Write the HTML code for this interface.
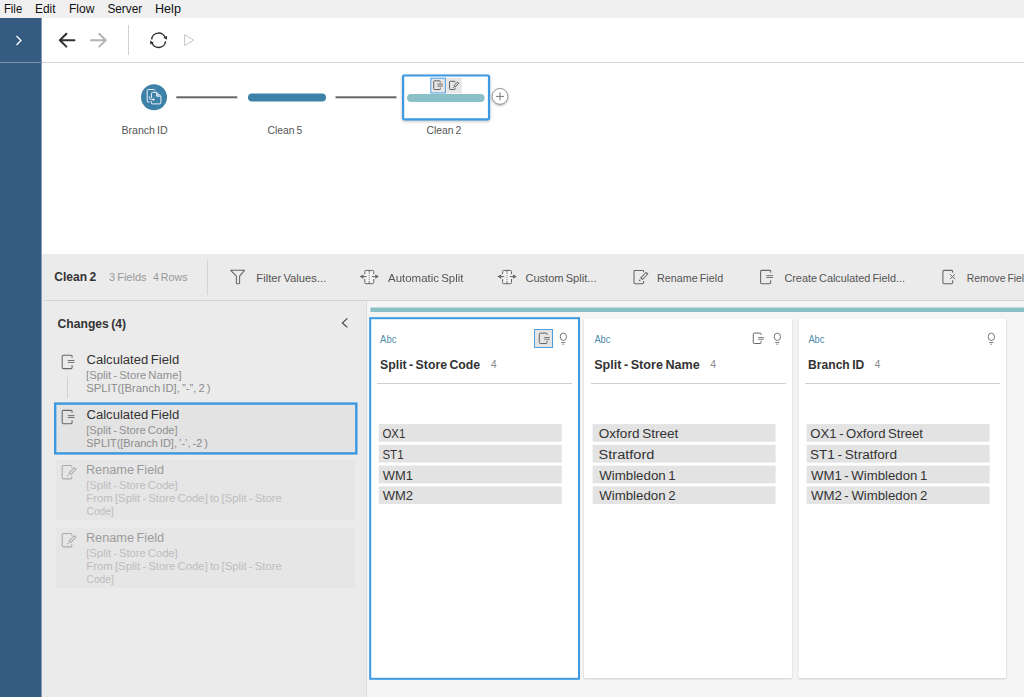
<!DOCTYPE html>
<html lang="en"><head><meta charset="utf-8"><title>Tableau Prep - Clean 2</title>
<style>
html,body{margin:0;padding:0}
body{width:1024px;height:697px;overflow:hidden;position:relative;background:#fff;font-family:"Liberation Sans",sans-serif}
div,span,svg{position:absolute;box-sizing:border-box}
.t{white-space:nowrap;word-spacing:-1px;line-height:1;transform-origin:0 50%;display:block}
#menubar{left:0;top:0;width:1024px;height:18px;background:#f0f0f0}
#sidebar{left:0;top:18px;width:41px;height:679px;background:#355c80}
#sidebar:after{content:'';position:absolute;left:41px;top:0;width:1px;height:679px;background:rgba(53,92,128,.6)}
#sidebar .ln{left:0;top:44px;width:42px;height:1px;background:#7d95ad}
#toolbar{left:42px;top:18px;width:982px;height:45px;background:#fff;border-bottom:1px solid #d3d3d3}
#flow{left:42px;top:63px;width:982px;height:191px;background:#fff}
#ptool{left:42px;top:254px;width:982px;height:47px;background:#ebebeb}
#ptool .hr{left:2px;top:46px;width:980px;height:1px;background:#d4d4d4}
#ptool .vr{left:165px;top:6px;width:1px;height:35px;background:#d4d4d4}
#changes{left:42px;top:301px;width:325px;height:396px;background:#ebebeb}
#vsep{left:366px;top:301px;width:1px;height:396px;background:#dcdcdc}
#profile{left:367px;top:301px;width:657px;height:396px;background:#f5f5f5}
.hl{height:1px;background:#d0d0d0;top:383px}
.ibox{background:#e4e4e4;border:1px solid #4a9fe3}
.chg-dis{left:56px;width:299px;height:60px;background:#e6e6e6}

</style></head>
<body>
<div id="menubar"></div>
<div id="sidebar"><div class="ln"></div>
<svg style="left:14px;top:16px" width="10" height="13" viewBox="0 0 10 13"><path d="M2.5 2 L7 6.5 L2.5 11" fill="none" stroke="#fff" stroke-width="1.3"/></svg>
</div>
<div id="toolbar">
<svg style="left:0;top:0" width="200" height="44" viewBox="42 18 200 44">
 <path d="M74.4 40.2 H59.8 M66.4 33.8 L59.8 40.2 L66.4 46.6" fill="none" stroke="#303030" stroke-width="2" stroke-linecap="round" stroke-linejoin="round"/>
 <path d="M90.9 40.2 H105.6 M99.2 33.8 L105.8 40.2 L99.2 46.6" fill="none" stroke="#b4b4b4" stroke-width="1.9" stroke-linecap="round" stroke-linejoin="round"/>
 <rect x="128" y="25" width="1" height="30" fill="#d0d0d0"/>
 <g fill="none" stroke="#2e2e2e" stroke-width="1.45">
  <path d="M151.65 39.3 A7 7 0 0 1 165.4 38.4"/>
  <path d="M165.55 41.3 A7 7 0 0 1 151.8 42.2"/>
 </g>
 <path d="M166.9 39.8 L167.1 35.9 L163.5 37.6 Z" fill="#2e2e2e"/>
 <path d="M150.3 40.6 L150.1 44.5 L153.7 42.8 Z" fill="#2e2e2e"/>
 <path d="M184.6 34.6 L193.6 40.1 L184.6 45.6 Z" fill="none" stroke="#c6c6c6" stroke-width="1"/>
</svg>
</div>
<div id="flow">
<svg style="left:0;top:0" width="982" height="191" viewBox="42 63 982 191">
 <circle cx="154" cy="97.2" r="13" fill="#3d80a8"/>
 <g fill="none" stroke="#eaf2f6" stroke-width="1" stroke-linejoin="round">
  <path d="M149.8 102 H148.2 Q147.2 102 147.2 101 V90.5 Q147.2 89.5 148.2 89.5 H153.9 L155.4 90.9"/>
  <path d="M151.4 98 V93.4 Q151.4 92.4 152.4 92.4 H156.6 L160.9 96.2 V102.9 Q160.9 103.9 159.9 103.9 H152.4 Q151.4 103.9 151.4 102.9 V101.2"/>
  <path d="M156.6 92.6 V96.2 H160.7"/>
  <path d="M149.4 96.4 V97.4 Q149.4 99.6 151.6 99.6 H153.4"/>
 </g>
 <path d="M156.9 93.2 L160 96 H156.9 Z" fill="#c3d9e5"/>
 <path d="M152.9 98.1 L155 99.6 L152.9 101.1 Z" fill="#eaf2f6"/>
 <rect x="176.3" y="96.3" width="61" height="2" fill="#666"/>
 <rect x="248" y="93.5" width="78" height="8" rx="4" fill="#3d80a8"/>
 <rect x="335.5" y="96.3" width="61" height="2" fill="#666"/>
 <rect x="403.1" y="75.5" width="85.9" height="43.8" rx="1" fill="#fff" stroke="#3d9ae2" stroke-width="2.2" style="filter:drop-shadow(0 1px 1.5px rgba(0,0,0,.25))"/>
 <rect x="446.3" y="77.7" width="15.4" height="15.7" fill="#e6e6e6"/>
 <rect x="430.8" y="78.2" width="14.6" height="14.8" fill="#e6e6e6" stroke="#4a9fe3" stroke-width="1"/>
 <rect x="407" y="94" width="77.6" height="8" rx="4" fill="#8bc0c8"/>
 <!-- small calc icon -->
 <g fill="none" stroke="#606060" stroke-width="1" stroke-linejoin="round">
  <path d="M440.3 82.5 V81.7 Q440.3 80.85 439.5 80.85 H434.5 Q433.7 80.85 433.7 81.7 V88.7 Q433.7 89.5 434.5 89.5 H439.5 Q440.3 89.5 440.3 88.7 V87.6"/>
  <path d="M437.4 84 H442.8 M437.4 86 H442.8" stroke-width="0.9"/>
 </g>
 <!-- small rename icon -->
 <g fill="none" stroke="#606060" stroke-width="1" stroke-linejoin="round">
  <path d="M455.2 82.4 V82.1 Q455.2 81.3 454.4 81.3 H450.3 Q449.5 81.3 449.5 82.1 V88.7 Q449.5 89.5 450.3 89.5 H454.4 Q455.2 89.5 455.2 88.7 V87.8"/>
  <path d="M457.5 82 L458.9 83.2 L455.2 87 L453.9 85.9 Z"/>
  <circle cx="453.2" cy="87.6" r="0.6" fill="#606060" stroke="none"/>
 </g>
 <circle cx="500" cy="96.4" r="7.9" fill="#fff" stroke="#9a9a9a" stroke-width="1" style="filter:drop-shadow(0 1px 1px rgba(0,0,0,.3))"/>
 <path d="M496 96.4 H504 M500 92.4 V100.4" stroke="#777" stroke-width="1" fill="none"/>
</svg>
</div>
<div id="ptool"><div class="hr"></div><div class="vr"></div>
<svg style="left:0;top:0" width="982" height="47" viewBox="42 254 982 47">
 <path d="M230.7 270.3 H244.5 L239.6 276.2 V283.1 Q239.6 283.7 239 283.7 H237 Q236.4 283.7 236.4 283.1 V276.2 Z" fill="none" stroke="#666" stroke-width="1.05" stroke-linejoin="round"/>
 <g transform="translate(359.6 270)" fill="none" stroke="#666" stroke-width="1" >
   <rect x="5.2" y="0.4" width="8.9" height="13.3" rx="1.2" fill="#f3f3f3" stroke="none"/>
   <path d="M5.2 4.2 V1.5 Q5.2 0.4 6.3 0.4 H13 Q14.1 0.4 14.1 1.5 V4.2 M5.2 9 V12.6 Q5.2 13.7 6.3 13.7 H13 Q14.1 13.7 14.1 12.6 V9"/>
   <path d="M9.6 0.4 V2.6 M9.6 11.2 V13.7"/>
   <path d="M9.6 3.2 V10.8" stroke-dasharray="0.9 1.1" stroke="#777"/>
   <path d="M3.4 6.6 H7 M12.3 6.6 H15.8"/>
   <path d="M0 6.6 L3.8 4.4 V8.8 Z M19.4 6.6 L15.6 4.4 V8.8 Z" fill="#666" stroke="none"/>
  </g>
 <g transform="translate(497.4 270)" fill="none" stroke="#666" stroke-width="1" >
   <rect x="5.2" y="0.4" width="8.9" height="13.3" rx="1.2" fill="#f3f3f3" stroke="none"/>
   <path d="M5.2 4.2 V1.5 Q5.2 0.4 6.3 0.4 H13 Q14.1 0.4 14.1 1.5 V4.2 M5.2 9 V12.6 Q5.2 13.7 6.3 13.7 H13 Q14.1 13.7 14.1 12.6 V9"/>
   <path d="M9.6 0.4 V2.6 M9.6 11.2 V13.7"/>
   <path d="M9.6 3.2 V10.8" stroke-dasharray="0.9 1.1" stroke="#777"/>
   <path d="M3.4 6.6 H7 M12.3 6.6 H15.8"/>
   <path d="M0 6.6 L3.8 4.4 V8.8 Z M19.4 6.6 L15.6 4.4 V8.8 Z" fill="#666" stroke="none"/>
  </g>
 <g transform="translate(633.4 269.6)" fill="none" stroke="#666" stroke-width="1.05" stroke-linejoin="round" >
   <path d="M10.2 2.6 V1.9 Q10.2 0.8 9.1 0.8 H1.7 Q0.6 0.8 0.6 1.9 V13 Q0.6 14.1 1.7 14.1 H9.1 Q10.2 14.1 10.2 13 V11.4"/>
   <path d="M12.6 2.9 L14.4 4.4 L9.1 9.9 L7.3 8.3 Z"/>
   <circle cx="6.3" cy="10.8" r="0.8" fill="#666" stroke="none"/>
  </g>
 <g transform="translate(759.8 269.8)" fill="none" stroke="#666" stroke-width="1.05" stroke-linejoin="round" >
   <path d="M10.9 3 V1.7 Q10.9 0.6 9.8 0.6 H1.9 Q0.8 0.6 0.8 1.7 V12.8 Q0.8 13.9 1.9 13.9 H9.8 Q10.9 13.9 10.9 12.8 V10.4"/>
   <path d="M6.6 5.8 H13.3 M6.6 7.7 H13.3" stroke-width="0.9"/>
  </g>
 <g transform="translate(942.2 269.8)" fill="none" stroke="#666" stroke-width="1.05" stroke-linejoin="round" >
   <path d="M10.5 3 V1.7 Q10.5 0.6 9.4 0.6 H1.8 Q0.7 0.6 0.7 1.7 V12.8 Q0.7 13.9 1.8 13.9 H9.4 Q10.5 13.9 10.5 12.8 V10.4"/>
   <path d="M7.7 4.4 L12.9 9.3 M12.9 4.4 L7.7 9.3" stroke-width="0.95"/>
  </g>
</svg>
</div>
<div id="changes"></div>
<div id="vsep"></div>
<div id="profile"></div>
<!-- changes list -->
<svg style="left:50px;top:398px" width="312" height="62" viewBox="50 398 312 62"><rect x="55.2" y="403.6" width="301.1" height="49.8" fill="#e3e3e3" stroke="#3b98e0" stroke-width="2.4"/></svg>
<div class="chg-dis" style="top:460px"></div>
<div class="chg-dis" style="top:527.5px"></div>
<div style="left:67px;top:377px;width:1px;height:21px;background:#d0d0d0"></div>
<svg style="left:42px;top:301px" width="326" height="396" viewBox="42 301 326 396">
 <path d="M347.4 318.4 L342.4 322.9 L347.4 327.4" fill="none" stroke="#444" stroke-width="1.2"/>
 <g transform="translate(61.4 354.7)" fill="none" stroke="currentColor" stroke-width="1.05" stroke-linejoin="round" color="#666">
   <path d="M10.7 3 V1.7 Q10.7 0.6 9.6 0.6 H1.9 Q0.8 0.6 0.8 1.7 V12.8 Q0.8 13.9 1.9 13.9 H9.6 Q10.7 13.9 10.7 12.8 V10.4"/>
   <path d="M6.4 5.8 H13.1 M6.4 7.7 H13.1" stroke-width="0.9"/>
  </g>
 <g transform="translate(61.4 409.8)" fill="none" stroke="currentColor" stroke-width="1.05" stroke-linejoin="round" color="#666">
   <path d="M10.7 3 V1.7 Q10.7 0.6 9.6 0.6 H1.9 Q0.8 0.6 0.8 1.7 V12.8 Q0.8 13.9 1.9 13.9 H9.6 Q10.7 13.9 10.7 12.8 V10.4"/>
   <path d="M6.4 5.8 H13.1 M6.4 7.7 H13.1" stroke-width="0.9"/>
  </g>
 <g transform="translate(61.6 464.8)" fill="none" stroke="currentColor" stroke-width="1.05" stroke-linejoin="round" color="#aaa">
   <path d="M10.2 2.6 V1.9 Q10.2 0.8 9.1 0.8 H1.7 Q0.6 0.8 0.6 1.9 V13 Q0.6 14.1 1.7 14.1 H9.1 Q10.2 14.1 10.2 13 V11.4"/>
   <path d="M12.6 2.9 L14.4 4.4 L9.1 9.9 L7.3 8.3 Z"/>
   <circle cx="6.3" cy="10.8" r="0.8" stroke="none" fill="currentColor"/>
  </g>
 <g transform="translate(61.6 532.8)" fill="none" stroke="currentColor" stroke-width="1.05" stroke-linejoin="round" color="#aaa">
   <path d="M10.2 2.6 V1.9 Q10.2 0.8 9.1 0.8 H1.7 Q0.6 0.8 0.6 1.9 V13 Q0.6 14.1 1.7 14.1 H9.1 Q10.2 14.1 10.2 13 V11.4"/>
   <path d="M12.6 2.9 L14.4 4.4 L9.1 9.9 L7.3 8.3 Z"/>
   <circle cx="6.3" cy="10.8" r="0.8" stroke="none" fill="currentColor"/>
  </g>
</svg>
<!-- cards -->
<svg style="left:360px;top:301px" width="664" height="396" viewBox="360 301 664 396">
 <rect x="370.4" y="307.5" width="660" height="4.5" fill="#8bc0c8"/>
 <g style="filter:drop-shadow(0.6px 1px 1.3px rgba(0,0,0,.16))">
  <rect x="584" y="318.7" width="208" height="359.3" fill="#fff"/>
  <rect x="798.5" y="318.7" width="207.5" height="359.3" fill="#fff"/>
 </g>
 <rect x="370.2" y="318.2" width="208.8" height="360.6" fill="#fff" stroke="#3d9ae2" stroke-width="2"/>
 <g fill="#e3e3e3"><rect x="378.7" y="424.1" width="183" height="17.75"/><rect x="378.7" y="444.85" width="183" height="17.75"/><rect x="378.7" y="465.6" width="183" height="17.75"/><rect x="378.7" y="486.35" width="183" height="17.75"/><rect x="592.6" y="424.1" width="183" height="17.75"/><rect x="592.6" y="444.85" width="183" height="17.75"/><rect x="592.6" y="465.6" width="183" height="17.75"/><rect x="592.6" y="486.35" width="183" height="17.75"/><rect x="806.6" y="424.1" width="183" height="17.75"/><rect x="806.6" y="444.85" width="183" height="17.75"/><rect x="806.6" y="465.6" width="183" height="17.75"/><rect x="806.6" y="486.35" width="183" height="17.75"/></g>
</svg>
<div class="hl" style="left:377px;width:195px"></div>
<div class="hl" style="left:591px;width:195px"></div>
<div class="hl" style="left:805px;width:195px"></div>



<div class="ibox" style="left:534px;top:329px;width:19.4px;height:19.4px"></div>
<svg style="left:368px;top:319px" width="656" height="40" viewBox="368 319 656 40">
 <g transform="translate(538.8 332.6)" fill="none" stroke="#666" stroke-width="1" stroke-linejoin="round" >
   <path d="M8.3 2.3 V1.5 Q8.3 0.5 7.3 0.5 H1.5 Q0.5 0.5 0.5 1.5 V9.9 Q0.5 10.9 1.5 10.9 H7.3 Q8.3 10.9 8.3 9.9 V8.2"/>
   <path d="M5.4 4.9 H11 M5.4 6.7 H11" stroke-width="0.85"/>
  </g>
 <g transform="translate(559.7 332.6)" fill="none" stroke="#777" stroke-width="1" >
   <ellipse cx="3.65" cy="4.2" rx="3.15" ry="3.7"/>
   <path d="M1.5 9.9 H5.6 M2.6 11.6 H4.5" stroke-width="0.9"/>
  </g>
 <g transform="translate(752.8 332.6)" fill="none" stroke="#666" stroke-width="1" stroke-linejoin="round" >
   <path d="M8.3 2.3 V1.5 Q8.3 0.5 7.3 0.5 H1.5 Q0.5 0.5 0.5 1.5 V9.9 Q0.5 10.9 1.5 10.9 H7.3 Q8.3 10.9 8.3 9.9 V8.2"/>
   <path d="M5.4 4.9 H11 M5.4 6.7 H11" stroke-width="0.85"/>
  </g>
 <g transform="translate(773.7 332.6)" fill="none" stroke="#777" stroke-width="1" >
   <ellipse cx="3.65" cy="4.2" rx="3.15" ry="3.7"/>
   <path d="M1.5 9.9 H5.6 M2.6 11.6 H4.5" stroke-width="0.9"/>
  </g>
 <g transform="translate(987.7 332.6)" fill="none" stroke="#777" stroke-width="1" >
   <ellipse cx="3.65" cy="4.2" rx="3.15" ry="3.7"/>
   <path d="M1.5 9.9 H5.6 M2.6 11.6 H4.5" stroke-width="0.9"/>
  </g>
</svg>

<div id="texts">
<span class="t" style="left:3px;top:3px;font-size:12.94px;font-weight:400;color:#111;transform:translateX(0.96px) scaleX(0.8736)">File</span>
<span class="t" style="left:34px;top:3px;font-size:12.94px;font-weight:400;color:#111;transform:translateX(1.0px) scaleX(0.9199)">Edit</span>
<span class="t" style="left:68px;top:3px;font-size:12.94px;font-weight:400;color:#111;transform:translateX(0.95px) scaleX(0.9327)">Flow</span>
<span class="t" style="left:107px;top:3px;font-size:12.94px;font-weight:400;color:#111;transform:translateX(0.38px) scaleX(0.9154)">Server</span>
<span class="t" style="left:155px;top:3px;font-size:12.94px;font-weight:400;color:#111;transform:translateX(0.01px) scaleX(0.973)">Help</span>
<span class="t" style="left:121px;top:125px;font-size:11.48px;font-weight:400;color:#555;transform:translateX(0.4px) scaleX(0.9247)">Branch ID</span>
<span class="t" style="left:267px;top:125px;font-size:11.48px;font-weight:400;color:#555;transform:translateX(0.41px) scaleX(0.9077)">Clean 5</span>
<span class="t" style="left:426px;top:125px;font-size:11.48px;font-weight:400;color:#555;transform:translateX(0.41px) scaleX(0.9044)">Clean 2</span>
<span class="t" style="left:54px;top:271px;font-size:12.5px;font-weight:700;color:#333;transform:translateX(0.29px) scaleX(0.9632)">Clean 2</span>
<span class="t" style="left:108px;top:272px;font-size:11.34px;font-weight:400;color:#999;transform:translateX(0.94px) scaleX(0.9729)">3 Fields</span>
<span class="t" style="left:152px;top:272px;font-size:11.34px;font-weight:400;color:#999;transform:translateX(0.93px) scaleX(0.9401)">4 Rows</span>
<span class="t" style="left:256px;top:273px;font-size:11.48px;font-weight:400;color:#555;transform:translateX(0.3px) scaleX(0.9792)">Filter Values...</span>
<span class="t" style="left:388px;top:273px;font-size:11.48px;font-weight:400;color:#555;transform:translateX(0.0px) scaleX(0.9994)">Automatic Split</span>
<span class="t" style="left:525px;top:273px;font-size:11.48px;font-weight:400;color:#555;transform:translateX(0.38px) scaleX(0.9667)">Custom Split...</span>
<span class="t" style="left:657px;top:273px;font-size:11.48px;font-weight:400;color:#555;transform:translateX(0.06px) scaleX(0.9383)">Rename Field</span>
<span class="t" style="left:784px;top:273px;font-size:11.48px;font-weight:400;color:#555;transform:translateX(0.4px) scaleX(0.9467)">Create Calculated Field...</span>
<span class="t" style="left:966px;top:273px;font-size:11.48px;font-weight:400;color:#555;transform:translateX(0.76px) scaleX(0.905)">Remove Field</span>
<span class="t" style="left:57px;top:318px;font-size:12.5px;font-weight:700;color:#333;transform:translateX(0.55px) scaleX(0.971)">Changes (4)</span>
<span class="t" style="left:86px;top:353px;font-size:13.08px;font-weight:400;color:#333;transform:translateX(0.52px) scaleX(0.9984)">Calculated Field</span>
<span class="t" style="left:86px;top:370px;font-size:10.76px;font-weight:400;color:#919191;transform:translateX(0.11px) scaleX(1.0519)">[Split - Store Name]</span>
<span class="t" style="left:86px;top:383px;font-size:11.05px;font-weight:400;color:#8c8c8c;transform:translateX(0.31px) scaleX(1.0198)">SPLIT([Branch ID], ”-”, 2 )</span>
<span class="t" style="left:86px;top:408px;font-size:13.08px;font-weight:400;color:#333;transform:translateX(0.52px) scaleX(0.9984)">Calculated Field</span>
<span class="t" style="left:86px;top:425px;font-size:10.76px;font-weight:400;color:#919191;transform:translateX(0.13px) scaleX(1.043)">[Split - Store Code]</span>
<span class="t" style="left:86px;top:438px;font-size:11.05px;font-weight:400;color:#8c8c8c;transform:translateX(0.33px) scaleX(0.9879)">SPLIT([Branch ID], ’-’, -2 )</span>
<span class="t" style="left:85px;top:463px;font-size:13.08px;font-weight:400;color:#9c9c9c;transform:translateX(0.92px) scaleX(0.9727)">Rename Field</span>
<span class="t" style="left:86px;top:480px;font-size:10.76px;font-weight:400;color:#bdbdbd;transform:translateX(0.13px) scaleX(1.043)">[Split - Store Code]</span>
<span class="t" style="left:86px;top:493px;font-size:11.05px;font-weight:400;color:#bdbdbd;transform:translateX(0.33px) scaleX(1.0278)">From [Split - Store Code] to [Split - Store</span>
<span class="t" style="left:86px;top:506px;font-size:11.05px;font-weight:400;color:#bdbdbd;transform:translateX(0.5px) scaleX(0.9282)">Code]</span>
<span class="t" style="left:85px;top:531px;font-size:13.08px;font-weight:400;color:#9c9c9c;transform:translateX(0.92px) scaleX(0.9727)">Rename Field</span>
<span class="t" style="left:86px;top:548px;font-size:10.76px;font-weight:400;color:#bdbdbd;transform:translateX(0.13px) scaleX(1.043)">[Split - Store Code]</span>
<span class="t" style="left:86px;top:561px;font-size:11.05px;font-weight:400;color:#bdbdbd;transform:translateX(0.33px) scaleX(1.0278)">From [Split - Store Code] to [Split - Store</span>
<span class="t" style="left:86px;top:574px;font-size:11.05px;font-weight:400;color:#bdbdbd;transform:translateX(0.5px) scaleX(0.9282)">Code]</span>
<span class="t" style="left:380px;top:335px;font-size:10.17px;font-weight:400;color:#4f8bab;transform:translateX(0.11px) scaleX(0.9308)">Abc</span>
<span class="t" style="left:380px;top:359px;font-size:12.79px;font-weight:700;color:#333;transform:translateX(0.04px) scaleX(0.9604)">Split - Store Code</span>
<span class="t" style="left:490px;top:359px;font-size:10.76px;font-weight:400;color:#8a8a8a;transform:translateX(0.87px) scaleX(0.988)">4</span>
<span class="t" style="left:382px;top:428px;font-size:12.65px;font-weight:400;color:#333;transform:translateX(0.48px) scaleX(0.9039)">OX1</span>
<span class="t" style="left:382px;top:449px;font-size:12.65px;font-weight:400;color:#333;transform:translateX(0.38px) scaleX(0.9156)">ST1</span>
<span class="t" style="left:382px;top:470px;font-size:12.65px;font-weight:400;color:#333;transform:translateX(0.79px) scaleX(1.0226)">WM1</span>
<span class="t" style="left:382px;top:490px;font-size:12.65px;font-weight:400;color:#333;transform:translateX(0.77px) scaleX(1.0267)">WM2</span>
<span class="t" style="left:594px;top:335px;font-size:10.17px;font-weight:400;color:#4f8bab;transform:translateX(0.38px) scaleX(0.9208)">Abc</span>
<span class="t" style="left:594px;top:359px;font-size:12.79px;font-weight:700;color:#333;transform:translateX(0.19px) scaleX(0.9853)">Split - Store Name</span>
<span class="t" style="left:710px;top:359px;font-size:10.76px;font-weight:400;color:#8a8a8a;transform:translateX(0.16px) scaleX(0.9798)">4</span>
<span class="t" style="left:598px;top:428px;font-size:12.65px;font-weight:400;color:#333;transform:translateX(0.8px) scaleX(1.0714)">Oxford Street</span>
<span class="t" style="left:598px;top:449px;font-size:12.65px;font-weight:400;color:#333;transform:translateX(0.52px) scaleX(1.1524)">Stratford</span>
<span class="t" style="left:599px;top:470px;font-size:12.65px;font-weight:400;color:#333;transform:translateX(0.19px) scaleX(1.0513)">Wimbledon 1</span>
<span class="t" style="left:599px;top:490px;font-size:12.65px;font-weight:400;color:#333;transform:translateX(0.19px) scaleX(1.0493)">Wimbledon 2</span>
<span class="t" style="left:808px;top:335px;font-size:10.17px;font-weight:400;color:#4f8bab;transform:translateX(0.38px) scaleX(0.9208)">Abc</span>
<span class="t" style="left:808px;top:359px;font-size:12.79px;font-weight:700;color:#333;transform:translateX(0.07px) scaleX(0.9468)">Branch ID</span>
<span class="t" style="left:874px;top:359px;font-size:10.76px;font-weight:400;color:#8a8a8a;transform:translateX(0.58px) scaleX(0.986)">4</span>
<span class="t" style="left:810px;top:428px;font-size:12.65px;font-weight:400;color:#333;transform:translateX(0.31px) scaleX(1.0367)">OX1 - Oxford Street</span>
<span class="t" style="left:809px;top:449px;font-size:12.65px;font-weight:400;color:#333;transform:translateX(0.91px) scaleX(1.0759)">ST1 - Stratford</span>
<span class="t" style="left:810px;top:470px;font-size:12.65px;font-weight:400;color:#333;transform:translateX(0.96px) scaleX(1.0432)">WM1 - Wimbledon 1</span>
<span class="t" style="left:810px;top:490px;font-size:12.65px;font-weight:400;color:#333;transform:translateX(0.96px) scaleX(1.0438)">WM2 - Wimbledon 2</span>
</div>
</body></html>
